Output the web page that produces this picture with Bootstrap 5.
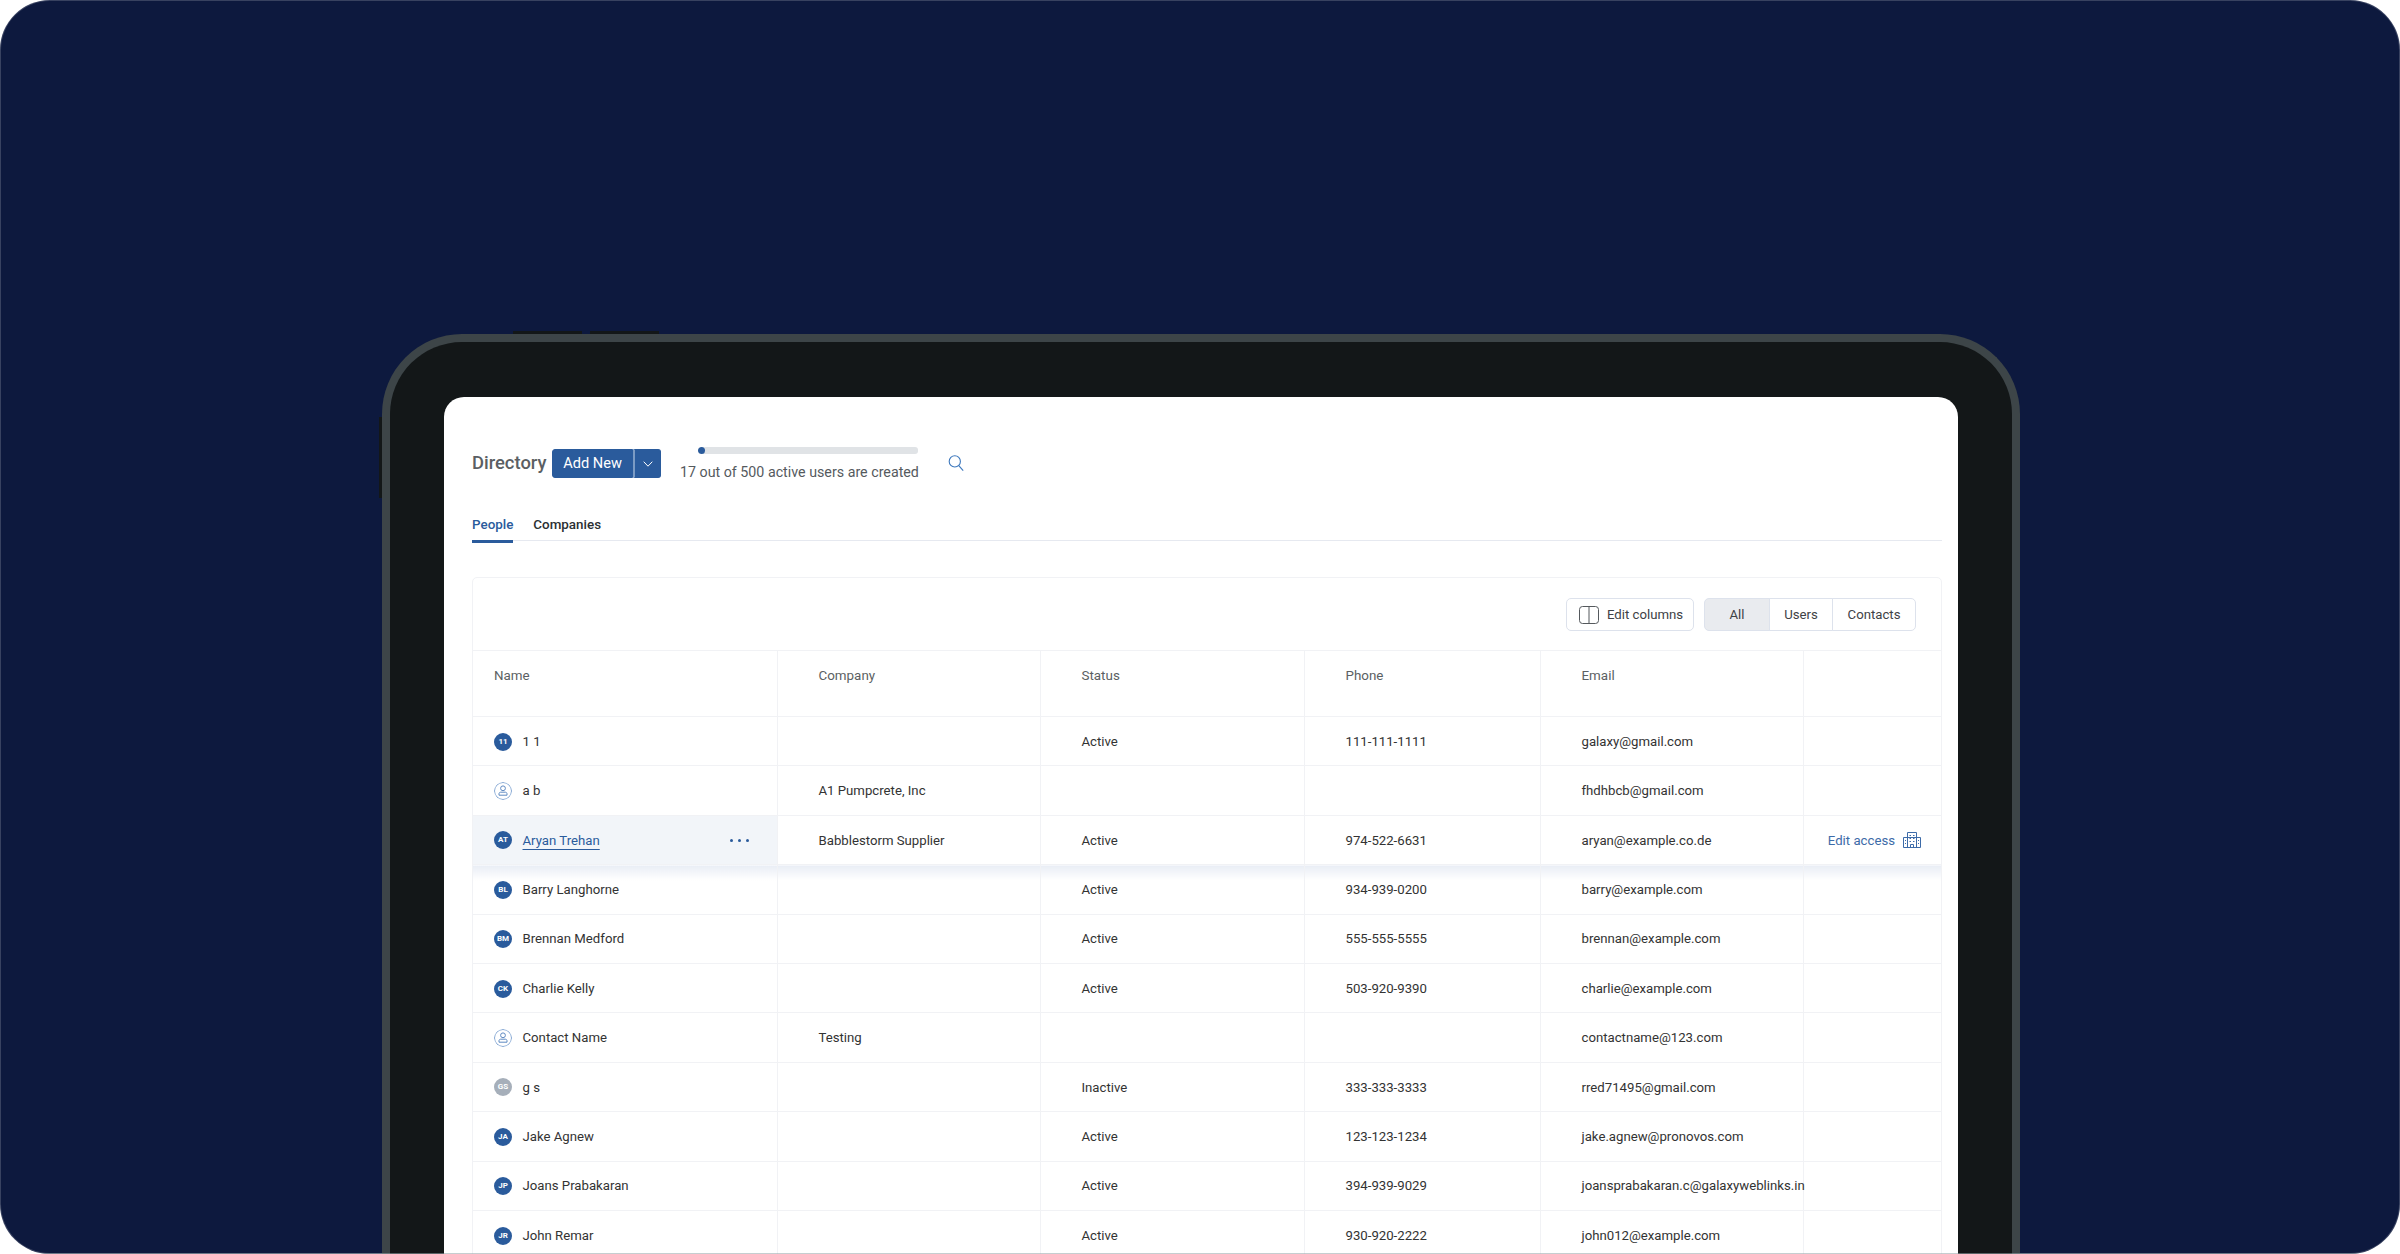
<!DOCTYPE html>
<html lang="en">
<head>
    <meta charset="UTF-8" />
    <title>Directory</title>
    <link href="https://cdn.jsdelivr.net/npm/bootstrap@5.3.0/dist/css/bootstrap.min.css" rel="stylesheet">
    <style>
        html, body { height: 100%; }
        body {
            background: #fff;
            font-family: Roboto, "Liberation Sans", sans-serif;
            font-size: 13.2px;
            color: #333;
            overflow: hidden;
        }

        .scene {
            position: relative;
            height: 1254px;
            background: #0d193e;
            border-radius: 50px;
            box-shadow: inset 0 0 0 1px rgba(255,255,255,.18);
            padding-top: 334px;
            overflow: hidden;
        }
        /* soft last pixel row of the shot */
        .scene::after {
            content: "";
            position: absolute;
            left: 0;
            right: 0;
            bottom: 0;
            height: 1px;
            background: rgba(150,165,170,.55);
        }

        .device {
            position: relative;
            width: 1638px;
            height: 940px;
            margin-left: 382px;
            padding: 55px 54px 0;
            background: #131718;
            border: 8px solid #3d4548;
            border-bottom: 0;
            border-radius: 80px 80px 0 0;
        }
        .side-key { position: absolute; background: #131718; }
        .key-a { top: -11px; left: 123px; width: 69px; height: 3px; }
        .key-b { top: -11px; left: 200px; width: 69px; height: 3px; }
        .key-c { top: 75px; left: -11px; width: 3px; height: 81px; }

        .screen {
            height: 100%;
            background: #fff;
            border-radius: 20px 20px 0 0;
            padding: 50px 16px 0 28px;
        }

        .dir-head { margin-top: 2px; }
        .page-title { font-size: 18.4px; font-weight: 500; color: #5b5f63; margin: 0; width: 80px; }

        .btn-add {
            --bs-btn-bg: #2a5b9c;
            --bs-btn-border-color: #2a5b9c;
            --bs-btn-color: #fff;
            --bs-btn-font-size: 14.6px;
            --bs-btn-font-weight: 400;
            --bs-btn-padding-y: 0;
            --bs-btn-border-radius: 3px;
            height: 29px;
        }
        .btn-add.main { width: 81px; padding: 0; }
        .btn-add.caret-part {
            width: 28px;
            padding: 0;
            margin-left: 0 !important;
            border-left: 2px solid #7b9bc4;
            display: flex;
            align-items: center;
            justify-content: center;
        }

        .usage { width: 238px; margin-left: 19px; }
        .usage .progress { width: 220px; height: 7px; margin-left: auto; background: #e0e3e6; border-radius: 3px; }
        .usage .progress-bar { background: #2a5b9c; border-radius: 4px; }
        .usage-text { margin-top: 7px; line-height: 22px; font-size: 14.25px; color: #555a5e; white-space: nowrap; }
        .search-ico { margin-left: 30px; margin-top: 7px; }

        .tabs-row { margin-top: 26px; border-bottom: 1px solid #e6e9f0; gap: 20px; height: 32px; }
        .tabs-row .nav-link {
            padding: 0;
            height: 34px;
            line-height: 31px;
            font-weight: 500;
            font-size: 13.4px;
            color: #2b2f33;
            border-bottom: 3px solid transparent;
        }
        .tabs-row .nav-link.active { color: #2a5b9c; border-bottom-color: #2a5b9c; }

        .dir-card {
            margin-top: 36px;
            border: 1px solid #f1f2f5;
            border-radius: 5px;
        }
        .dir-tools { height: 72px; padding: 20px 25px 0 0; gap: 10px; }
        .btn-tool {
            --bs-btn-bg: #fff;
            --bs-btn-color: #3e4246;
            --bs-btn-border-color: #dde2ec;
            --bs-btn-font-size: 13.2px;
            --bs-btn-padding-y: 0;
            --bs-btn-border-radius: 5px;
            height: 33px;
        }
        .btn-columns { width: 128px; padding: 0 0 0 12px; gap: 8px; display: flex; align-items: center; }
        .tool-group .btn-tool { padding: 0; }
        .tool-group .btn-tool.active { background: #e9ebef; color: #3e4246; border-color: #dde2ec; }
        .seg-all { width: 66px; }
        .seg-users { width: 64px; }
        .seg-contacts { width: 84px; }

        .dir-table { table-layout: fixed; width: 1468px; margin: 0; color: #333; border-color: #f1f2f5; }
        .dir-table th, .dir-table td {
            border-right: 1px solid #f1f2f5;
            border-bottom: 1px solid #f1f2f5;
            padding: 0 0 0 41px;
            font-weight: 400;
            font-size: 13.2px;
            white-space: nowrap;
            vertical-align: middle;
        }
        .dir-table th:last-child, .dir-table td:last-child { border-right: 0; }
        .dir-table thead tr { border-top: 1px solid #f1f2f5; }
        .dir-table th { height: 66px; vertical-align: top; padding-top: 15px; color: #5b5f63; font-size: 13.4px; }
        .dir-table td { height: 49.4px; padding-top: 1px; }
        .dir-table .name-cell { padding: 1px 28px 0 21px; }
        .dir-table th.name-cell { padding-top: 15px; }
        .dir-table td.edit-access { padding: 1px 20px 0 0; color: #3d6ba8; }
        .w-name { width: 304px; }
        .w-company { width: 263px; }
        .w-status { width: 264px; }
        .w-phone { width: 236px; }
        .w-email { width: 263px; }

        .who { gap: 10.5px; }
        .face {
            width: 18px;
            height: 18px;
            flex: none;
            border-radius: 50%;
            background: #2a5b9c;
            color: #fff;
            font-size: 8px;
            font-weight: 700;
            line-height: 18px;
            text-align: center;
        }
        .face.off { background: #a6afba; }
        svg.face { background: none; }

        .row-open .name-cell { background: #f2f5f9; }
        .row-open a { color: #2a5b9c; text-underline-offset: 4px; text-decoration-thickness: 1px; }
        .row-after td { background: linear-gradient(#e9edf5, #fff 15px); }
        .row-dots { margin-left: auto; gap: 5px; }
        .row-dots i { width: 3px; height: 3px; border-radius: 50%; background: #2a5b9c; }
        .edit-access a { color: #3d6ba8; text-decoration: none; }
        .edit-access svg { flex: none; }
    </style>
</head>
<body>

<div class="scene">
    <div class="device">
        <span class="side-key key-a"></span>
        <span class="side-key key-b"></span>
        <span class="side-key key-c"></span>

        <div class="screen">
            <!-- header -->
            <div class="d-flex align-items-start">
                <div class="d-flex align-items-center dir-head">
                    <h1 class="page-title">Directory</h1>
                    <div class="btn-group">
                        <button type="button" class="btn btn-add main">Add New</button>
                        <button type="button" class="btn btn-add caret-part">
                            <svg width="10" height="6" viewBox="0 0 10 6" fill="none" stroke="#fff" stroke-width="1"><path d="M.7.7 5 5.2 9.3.7"/></svg>
                        </button>
                    </div>
                </div>
                <div class="usage">
                    <div class="progress"><div class="progress-bar" style="width:3.4%"></div></div>
                    <div class="usage-text">17 out of 500 active users are created</div>
                </div>
                <svg class="search-ico" width="16" height="18" viewBox="0 0 16 18" fill="none" stroke="#3d78bd" stroke-width="1.1"><circle cx="6.8" cy="7.4" r="5.6"/><path d="m10.8 11.6 4.4 5"/></svg>
            </div>

            <!-- tabs -->
            <ul class="nav tabs-row">
                <li class="nav-item"><a class="nav-link active" href="#">People</a></li>
                <li class="nav-item"><a class="nav-link" href="#">Companies</a></li>
            </ul>

            <!-- table card -->
            <div class="dir-card">
                <div class="d-flex justify-content-end dir-tools">
                    <button type="button" class="btn btn-tool btn-columns">
                        <svg width="20" height="18" viewBox="0 0 20 18" fill="none" stroke="#55595d" stroke-width="1"><rect x=".5" y=".5" width="19" height="17" rx="3"/><path d="M10 .5v17"/></svg>
                        Edit columns
                    </button>
                    <div class="btn-group tool-group">
                        <button type="button" class="btn btn-tool seg-all active">All</button>
                        <button type="button" class="btn btn-tool seg-users">Users</button>
                        <button type="button" class="btn btn-tool seg-contacts">Contacts</button>
                    </div>
                </div>

                <table class="table dir-table">
                    <thead>
                        <tr>
                            <th class="w-name name-cell">Name</th>
                            <th class="w-company">Company</th>
                            <th class="w-status">Status</th>
                            <th class="w-phone">Phone</th>
                            <th class="w-email">Email</th>
                            <th></th>
                        </tr>
                    </thead>
                    <tbody>
                        <tr>
                            <td class="name-cell"><div class="d-flex align-items-center who"><span class="face">11</span>1 1</div></td>
                            <td></td><td>Active</td><td>111-111-1111</td><td>galaxy@gmail.com</td><td></td>
                        </tr>
                        <tr>
                            <td class="name-cell"><div class="d-flex align-items-center who">
                                <svg class="face" viewBox="0 0 18 18" fill="none" stroke="#7fa3d1" stroke-width="1"><circle cx="9" cy="9" r="8.5"/><circle cx="9" cy="6.3" r="2.4" stroke="#5f8ac2"/><path d="M5 13.2v-1.4c0-.9.7-1.6 1.6-1.6h4.8c.9 0 1.6.7 1.6 1.6v1.4z" stroke="#5f8ac2"/></svg>a b</div></td>
                            <td>A1 Pumpcrete, Inc</td><td></td><td></td><td>fhdhbcb@gmail.com</td><td></td>
                        </tr>
                        <tr class="row-open">
                            <td class="name-cell"><div class="d-flex align-items-center who"><span class="face">AT</span><a href="#">Aryan Trehan</a>
                                <span class="d-flex row-dots"><i></i><i></i><i></i></span></div></td>
                            <td>Babblestorm Supplier</td><td>Active</td><td>974-522-6631</td><td>aryan@example.co.de</td>
                            <td class="edit-access"><div class="d-flex align-items-center justify-content-end gap-2"><a href="#">Edit access</a>
                                <svg width="18" height="16" viewBox="0 0 18 16" fill="none" stroke="#3d6ba8" stroke-width="1"><path d="M.5 5.5h17v10H.5zM4.5 5.5v-5h9v5"/><path d="M4.5 5.5v10M13.5 5.5v10M7.5 15.5v-3h3v3M6.5 3.5h1.5M10 3.5h1.5M6.5 6.5h1.5M10 6.5h1.5M6.5 9.5h1.5M10 9.5h1.5M2 8.5h1M2 11.5h1M15 8.5h1M15 11.5h1"/></svg></div></td>
                        </tr>
                        <tr class="row-after">
                            <td class="name-cell"><div class="d-flex align-items-center who"><span class="face">BL</span>Barry Langhorne</div></td>
                            <td></td><td>Active</td><td>934-939-0200</td><td>barry@example.com</td><td></td>
                        </tr>
                        <tr>
                            <td class="name-cell"><div class="d-flex align-items-center who"><span class="face">BM</span>Brennan Medford</div></td>
                            <td></td><td>Active</td><td>555-555-5555</td><td>brennan@example.com</td><td></td>
                        </tr>
                        <tr>
                            <td class="name-cell"><div class="d-flex align-items-center who"><span class="face">CK</span>Charlie Kelly</div></td>
                            <td></td><td>Active</td><td>503-920-9390</td><td>charlie@example.com</td><td></td>
                        </tr>
                        <tr>
                            <td class="name-cell"><div class="d-flex align-items-center who">
                                <svg class="face" viewBox="0 0 18 18" fill="none" stroke="#7fa3d1" stroke-width="1"><circle cx="9" cy="9" r="8.5"/><circle cx="9" cy="6.3" r="2.4" stroke="#5f8ac2"/><path d="M5 13.2v-1.4c0-.9.7-1.6 1.6-1.6h4.8c.9 0 1.6.7 1.6 1.6v1.4z" stroke="#5f8ac2"/></svg>Contact Name</div></td>
                            <td>Testing</td><td></td><td></td><td>contactname@123.com</td><td></td>
                        </tr>
                        <tr>
                            <td class="name-cell"><div class="d-flex align-items-center who"><span class="face off">GS</span>g s</div></td>
                            <td></td><td>Inactive</td><td>333-333-3333</td><td>rred71495@gmail.com</td><td></td>
                        </tr>
                        <tr>
                            <td class="name-cell"><div class="d-flex align-items-center who"><span class="face">JA</span>Jake Agnew</div></td>
                            <td></td><td>Active</td><td>123-123-1234</td><td>jake.agnew@pronovos.com</td><td></td>
                        </tr>
                        <tr>
                            <td class="name-cell"><div class="d-flex align-items-center who"><span class="face">JP</span>Joans Prabakaran</div></td>
                            <td></td><td>Active</td><td>394-939-9029</td><td>joansprabakaran.c@galaxyweblinks.in</td><td></td>
                        </tr>
                        <tr>
                            <td class="name-cell"><div class="d-flex align-items-center who"><span class="face">JR</span>John Remar</div></td>
                            <td></td><td>Active</td><td>930-920-2222</td><td>john012@example.com</td><td></td>
                        </tr>
                    </tbody>
                </table>
            </div>
        </div>
    </div>
</div>

<script src="https://cdn.jsdelivr.net/npm/bootstrap@5.3.0/dist/js/bootstrap.bundle.min.js"></script>
</body>
</html>
